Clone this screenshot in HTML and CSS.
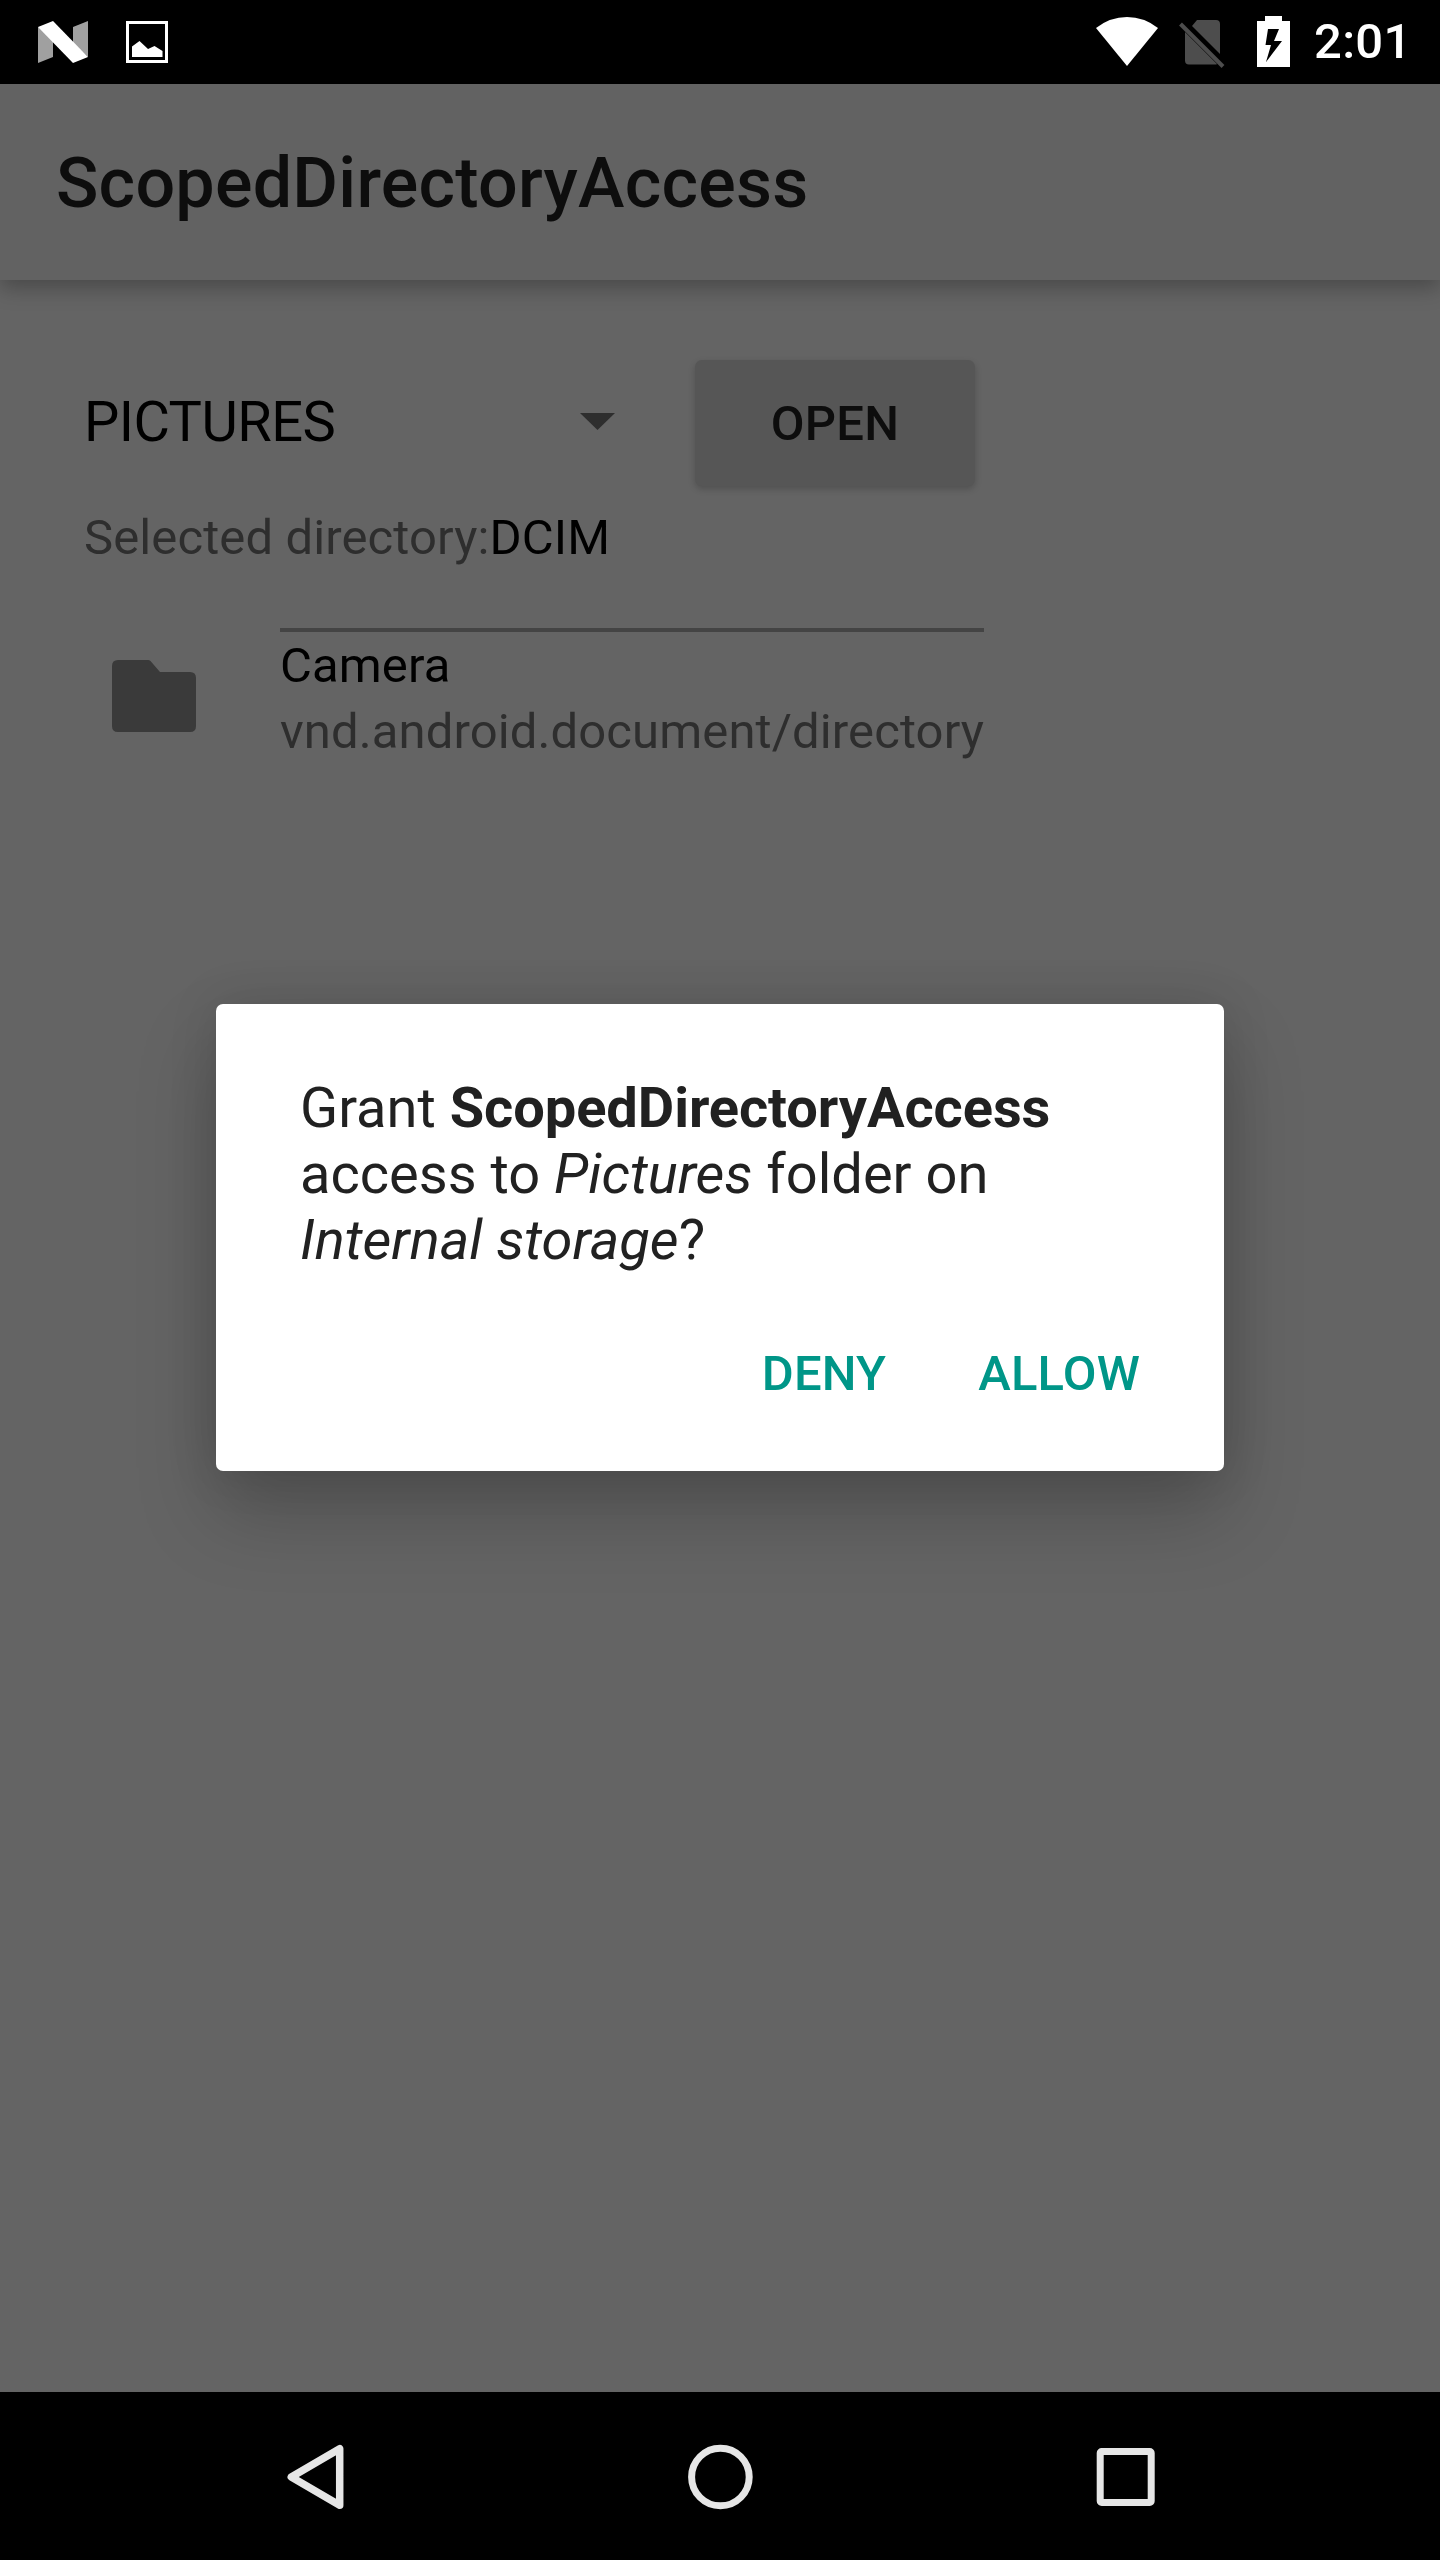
FILE: index.html
```html
<!DOCTYPE html>
<html lang="en">
<head>
<meta charset="utf-8">
<title>ScopedDirectoryAccess</title>
<link rel="stylesheet" href="styles.css">
</head>
<body>
<div class="screen">
  <header class="status-bar">
    <svg class="icon-n" viewBox="0 0 50 42"><path fill="#a0a0a0" d="M0 6v36l15-6V12zM35 6l15-6v36l-15-14z"/><path fill="#fff" d="M0 6l15-6 35 36-15 6z"/></svg>
    <svg class="icon-image" viewBox="0 0 42 42"><path fill="none" stroke="#fff" stroke-width="3" d="M1.500 1.500h39v39h-39z"/><path fill="#fff" d="M6 25.500l7.500-5.500 8.500 8 6.500-3 8 5v6H6z"/></svg>
    <span class="spacer"></span>
    <svg class="icon-wifi" viewBox="0 0 62 49"><path fill="#fff" d="M31 49L0 11Q14 0 31 0t31 11z"/></svg>
    <svg class="icon-sim" viewBox="0 0 46 46"><path fill="#4d4d4d" d="M18 0h19q4 0 4 4v30L13 6zM6 12l32 32q-.5.500-2 .5H10q-4 0-4-4z"/><path stroke="#4d4d4d" stroke-width="4" d="M1.500 4L44 46.500"/></svg>
    <svg class="icon-battery" viewBox="0 0 33 51"><path fill="#fff" fill-rule="evenodd" d="M8 0h17v5h8v46H0V5h8zM11 13L8.500 29H14L9 46 25 25h-8l5-12z"/></svg>
    <span class="clock">2:01</span>
  </header>
  <div class="app-bar"><h1 class="title">ScopedDirectoryAccess</h1></div>
  <main class="content">
    <div class="picker">
      <div class="spinner"><span>PICTURES</span><svg class="caret" viewBox="0 0 35 17"><path fill="#2e2e2e" d="M0 0h35L17.500 17z"/></svg></div>
      <button class="open">OPEN</button>
    </div>
    <p class="selected">Selected directory:<span class="name">DCIM</span></p>
    <div class="entry">
      <svg class="folder" viewBox="0 0 84 72"><path fill="#3a3a3a" d="M6 0h30q1.500 0 2.500 1L48 12h30q6 0 6 6v48q0 6-6 6H6q-6 0-6-6V6q0-6 6-6z"/></svg>
      <div class="entry-text"><div class="name">Camera</div><div>vnd.android.document/directory</div></div>
    </div>
  </main>
  <nav class="nav-bar">
    <svg class="nav-icon" viewBox="0 0 70 70"><path fill="none" stroke="#e6e6e6" stroke-width="7.500" stroke-linejoin="round" d="M59.700 6.700v56.600L11.300 35z"/></svg>
    <svg class="nav-icon" viewBox="0 0 70 70"><circle cx="35.400" cy="35" r="28.800" fill="none" stroke="#e6e6e6" stroke-width="7"/></svg>
    <svg class="nav-icon" viewBox="0 0 70 70"><rect x="10.200" y="9.500" width="51" height="51" rx="1.500" fill="none" stroke="#e6e6e6" stroke-width="7"/></svg>
  </nav>
  <section class="dialog">
    <p class="message">Grant <b>ScopedDirectoryAccess</b> access to <i>Pictures</i> folder on <i>Internal storage</i>?</p>
    <div class="actions"><button>DENY</button><button>ALLOW</button></div>
  </section>
</div>
</body>
</html>
```
FILE: styles.css
```css
* { box-sizing: border-box; margin: 0; padding: 0; }
body { background: #646464; font-family: Roboto, "Noto Sans", sans-serif; }
button { border: 0; background: none; font: 500 49px/58px Roboto, sans-serif; letter-spacing: .2px; }
svg { display: block; flex: none; }
.screen { position: relative; width: 1440px; height: 2560px; display: flex; flex-direction: column; overflow: hidden; background: #646464; }
.status-bar { height: 84px; flex: none; display: flex; align-items: flex-start; padding-left: 38px; padding-right: 30px; background: #000; position: relative; }
.icon-n { width: 50px; height: 42px; margin-top: 21px; }
.icon-image { width: 42px; height: 42px; margin: 21px 0 0 38px; }
.spacer { flex: 1; }
.icon-wifi { width: 62px; height: 49px; margin-top: 17px; }
.icon-sim { width: 46px; height: 48px; margin: 19px 0 0 21px; overflow: visible; }
.icon-battery { width: 33px; height: 51px; margin: 16px 0 0 32px; }
.clock { width: 96px; margin-left: 24px; margin-top: 13px; font-size: 49px; line-height: 58px; font-weight: 500; letter-spacing: .3px; color: #fff; white-space: nowrap; }
.app-bar { height: 196px; flex: none; display: flex; align-items: center; padding: 2px 0 0 56px; background: #626262; box-shadow: 0 8px 20px rgba(0, 0, 0, .27); }
.title { font-size: 70px; line-height: 82px; font-weight: 500; letter-spacing: .24px; color: #0d0d0d; }
.content { flex: 1; padding: 80px 84px 0; color: #2e2e2e; font-size: 49px; line-height: 58px; letter-spacing: .11px; }
.picker { display: flex; height: 126px; align-items: center; }
.spinner { width: 611px; padding: 0 80px 3px 0; display: flex; align-items: center; justify-content: space-between; color: #000; font-size: 56px; line-height: 66px; letter-spacing: -.55px; }
.caret { width: 35px; height: 17px; }
.open { width: 280px; height: 126px; padding-top: 1px; border-radius: 7px; background: #565656; color: #0d0d0d; box-shadow: 0 3px 7px rgba(0, 0, 0, .2); }
.selected { margin-top: 23px; }
.name { color: #000; }
.entry { display: flex; margin-top: 61px; padding-left: 28px; }
.folder { width: 84px; height: 72px; margin-top: 32px; }
.entry-text { margin-left: 84px; padding-top: 1px; border-top: 4px solid #444; line-height: 66px; white-space: nowrap; }
.nav-bar { height: 168px; flex: none; display: flex; align-items: center; justify-content: center; gap: 335px; padding-top: 1px; background: #000; }
.nav-icon { width: 70px; height: 70px; }
.dialog { position: absolute; left: 216px; top: 1004px; width: 1008px; height: 467px; padding: 71px 84px 0; border-radius: 7px; background: #fff; box-shadow: 0 42px 80px rgba(0, 0, 0, .21), 0 0 50px rgba(0, 0, 0, .12); }
.message { font-size: 56px; line-height: 66px; color: #212121; }
.message b { letter-spacing: -.06px; }
.actions { display: flex; justify-content: flex-end; gap: 92px; margin-top: 72px; }
.actions button { color: #009688; }
```
